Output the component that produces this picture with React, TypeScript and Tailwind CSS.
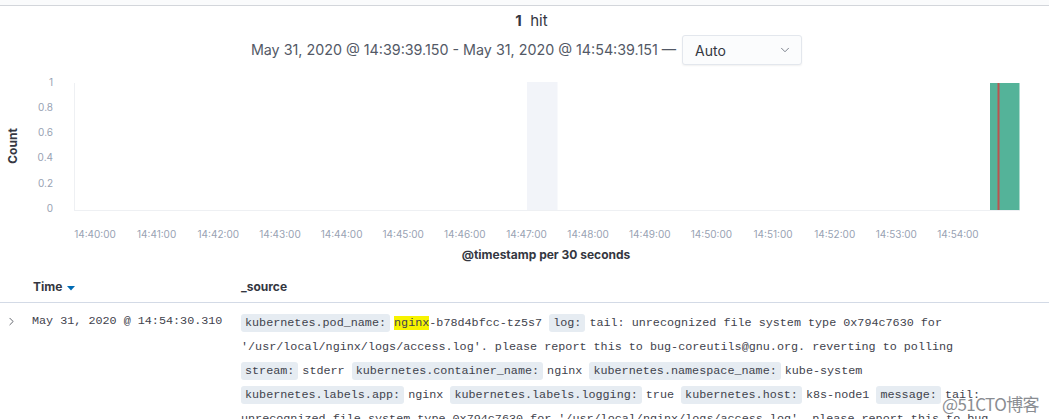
import React from "react";
import { ChevronDown, ChevronRight } from "lucide-react";

const xTicks = [
  "14:40:00", "14:41:00", "14:42:00", "14:43:00", "14:44:00", "14:45:00", "14:46:00", "14:47:00",
  "14:48:00", "14:49:00", "14:50:00", "14:51:00", "14:52:00", "14:53:00", "14:54:00",
];
const yTicks = [
  { v: "1", y: 18 },
  { v: "0.8", y: 43 },
  { v: "0.6", y: 68 },
  { v: "0.4", y: 93 },
  { v: "0.2", y: 119 },
  { v: "0", y: 144 },
];

const msg =
  "tail: unrecognized file system type 0x794c7630 for '/usr/local/nginx/logs/access.log'. please report this to bug-coreutils@gnu.org. reverting to polling";

const fields: [string, React.ReactNode][] = [
  ["kubernetes.pod_name:", <><mark className="bg-[#f7f300] text-inherit">nginx</mark>-b78d4bfcc-tz5s7</>],
  ["log:", msg],
  ["stream:", "stderr"],
  ["kubernetes.container_name:", "nginx"],
  ["kubernetes.namespace_name:", "kube-system"],
  ["kubernetes.labels.app:", "nginx"],
  ["kubernetes.labels.logging:", "true"],
  ["kubernetes.host:", "k8s-node1"],
  ["message:", msg],
  ["kubernetes.pod_id:", "3c5e8b1a-7d2f-4f0e-9b61-2a4c6e8d0f13"],
];

const Chart = () => (
  <svg width={1049} height={205} className="block">
    <text
      x={14}
      y={81}
      transform="rotate(-90 14 81)"
      textAnchor="middle"
      dominantBaseline="middle"
      fontSize={12}
      fontWeight={700}
      fill="#343741"
    >
      Count
    </text>
    {yTicks.map((t) => (
      <text key={t.v} x={53} y={t.y} textAnchor="end" dominantBaseline="middle" fontSize={10} fill="#98a2b3">
        {t.v}
      </text>
    ))}
    <line x1={74.5} y1={18} x2={74.5} y2={145} stroke="#eef0f3" />
    <line x1={74} y1={145.5} x2={1020} y2={145.5} stroke="#eef0f3" />
    <rect x={527} y={17} width={30.5} height={128} fill="#f2f4f9" />
    <rect x={990} y={18} width={29.5} height={127} fill="#54b399" />
    <rect x={997.5} y={18} width={2} height={127} fill="#b95450" />
    {xTicks.map((t, i) => (
      <text key={t} x={95 + i * 61.64} y={170} textAnchor="middle" dominantBaseline="middle" fontSize={10} fill="#98a2b3">
        {t}
      </text>
    ))}
    <text x={546} y={191} textAnchor="middle" dominantBaseline="middle" fontSize={12} fontWeight={700} fill="#343741">
      @timestamp per 30 seconds
    </text>
  </svg>
);

export default function App() {
  return (
    <div className="relative w-[1049px] h-[419px] overflow-hidden bg-white font-['Inter',sans-serif] text-[#343741]">
      <div className="h-[6px] border-b border-[#d3d6db] bg-[#fafbfc]" />

      <div className="flex flex-col items-center">
        <div className="mt-[5px] h-[20px] leading-[20px] text-[15px] pl-[14px]">
          <span className="font-bold">1</span>&nbsp; hit
        </div>
        <div className="mt-[4px] flex items-center gap-[6px] h-[30px] pl-[4px]">
          <span className="text-[14.3px] text-[#535966]">
            May 31, 2020 @ 14:39:39.150 - May 31, 2020 @ 14:54:39.151 —
          </span>
          <div className="w-[120px] h-[30px] flex items-center justify-between pl-[12px] pr-[9px] bg-[#fbfcfd] border border-[#e3e7ed] rounded-[3px] shadow-[0_1px_2px_rgba(0,0,0,0.06)] text-[14px]">
            <span>Auto</span>
            <ChevronDown size={14} strokeWidth={1.5} className="text-[#69707d]" />
          </div>
        </div>
      </div>

      <Chart />

      <div className="grid grid-cols-[32px_209px_764px] h-[33px] items-center border-b border-[#d3dae6] text-[12px] font-bold">
        <div />
        <div className="flex items-center pl-[1px] gap-[5px] mt-[1px]">
          Time
          <svg width={8} height={5} viewBox="0 0 8 5" className="mt-[3px]">
            <path d="M0 0h8L4 4.5z" fill="#006bb4" />
          </svg>
        </div>
        <div className="mt-[1px]">_source</div>
      </div>

      <div className="grid grid-cols-[32px_209px_764px] pt-[8px] font-['Liberation_Mono',monospace] text-[11.75px] leading-[24px] text-[#3f434d]">
        <div className="flex h-[24px] items-center pl-[5px] -mt-[2px]">
          <ChevronRight size={13} strokeWidth={1.4} className="text-[#343741]" />
        </div>
        <div className="-mt-[2px]">May 31, 2020 @ 14:54:30.310</div>
        <div className="break-words">
          {fields.map(([k, v], i) => (
            <React.Fragment key={i}>
              <span className="bg-[#e6ecf2] rounded-[3px] px-[4px] py-[2px] mr-[4px]">{k}</span>
              <span>{v}</span>{" "}
            </React.Fragment>
          ))}
        </div>
      </div>

      <div className="absolute left-[942px] top-[391px] text-[17px] text-[#8a8d92] font-['Noto_Sans_CJK_SC',sans-serif] tracking-[-0.6px]">
        @51CTO博客
      </div>
    </div>
  );
}
